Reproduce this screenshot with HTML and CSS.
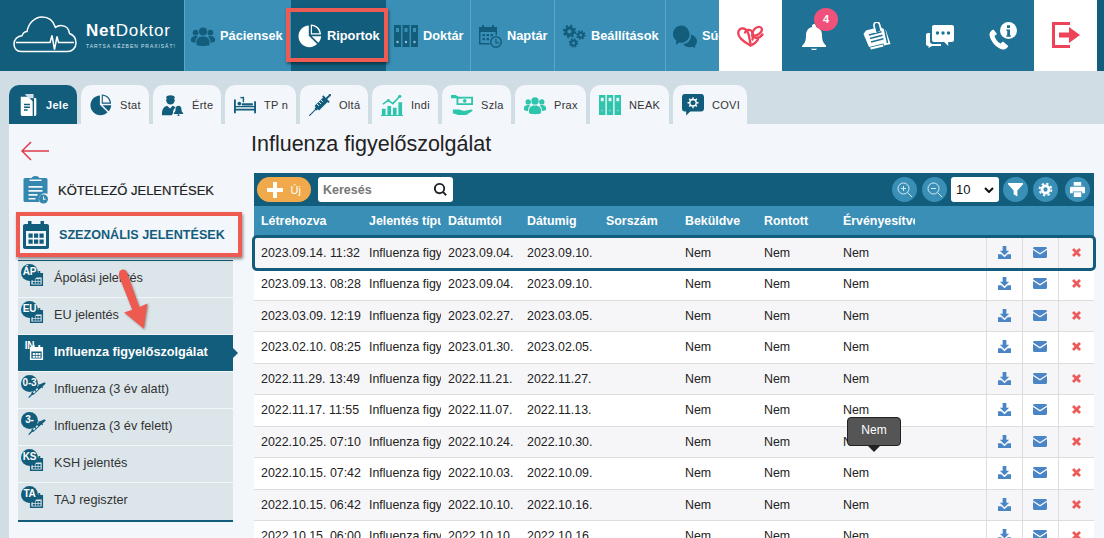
FILE: index.html
```html
<!doctype html>
<html>
	<head>
		<meta http-equiv="Content-Type" content="text/html; charset=utf-8">
		<title>NetDoktor - Influenza figyelőszolgálat</title>
		<link rel="stylesheet" href="styles.css">
	</head>
<body>

	<svg class="sprites" xmlns="http://www.w3.org/2000/svg">
		<symbol id="i-users" viewBox="0 0 24 24"><circle cx="12" cy="7.500" r="4"/><circle cx="4.600" cy="8.600" r="2.900"/><circle cx="19.400" cy="8.600" r="2.900"/><path d="M5.500 21v-3.500c0-3 2.500-5 6.500-5s6.500 2 6.500 5V21c-3.500 1.300-9.500 1.300-13 0z"/><path d="M4.500 17.500v1.200C2 18.400 0 17.500 0 17.500v-2.300c0-2 1.800-3.300 4.600-3.300 1 0 1.900.2 2.500.5-1.500 1.200-2.600 3-2.600 5.100zM19.500 17.500v1.200c2.500-.3 4.500-1.200 4.500-1.200v-2.300c0-2-1.800-3.300-4.600-3.300-1 0-1.900.2-2.500.5 1.500 1.200 2.600 3 2.600 5.100z"/></symbol>
		<symbol id="i-pie" viewBox="0 0 24 24"><path d="M10.800 1.500C4.900 1.800.5 6.500.5 12.300c0 6 4.900 10.900 10.900 10.900 3 0 5.700-1.200 7.700-3.200l-8.300-8.200z"/><path fill-rule="evenodd" d="M12.800.5V10.500H23C23 4.800 18.500.5 12.800.5zM14 1.900c3.900.4 6.900 3.400 7.500 7.300H14z"/><path d="M13.600 12.300H23.200c-.2 2.500-1.200 4.800-2.800 6.400z"/></symbol>
		<symbol id="i-binders" viewBox="0 0 24 24"><path fill-rule="evenodd" d="M0 1h7v22H0zM8.500 1h7v22h-7zM17 1h7v22h-7zM2 4v4h3V4zM10.500 4v4h3V4zM19 4v4h3V4z"/><circle cx="3.500" cy="18" r="1.200" fill="#8fc3dc"/><circle cx="12" cy="18" r="1.200" fill="#8fc3dc"/><circle cx="20.500" cy="18" r="1.200" fill="#8fc3dc"/></symbol>
		<symbol id="i-calclock" viewBox="0 0 24 24"><path fill-rule="evenodd" d="M1 3h3V1h2v2h8V1h2v2h3v8.200a7 7 0 0 0-1.500-.2V8H2.500v11h9l.4 1.500H1zM4.500 10h2.500v2.300H4.500zM8.500 10H11v2.300H8.500zM12.500 10H15v2.300h-2.500zM4.500 14H7v2.300H4.500zM8.500 14H11v2.300H8.500z"/><path fill-rule="evenodd" d="M18 12a6 6 0 1 1 0 12 6 6 0 0 1 0-12zm0 1.500a4.500 4.500 0 1 0 0 9 4.500 4.500 0 0 0 0-9zM17.300 15h1.300v3.200h2.400v1.300h-3.700z"/></symbol>
		<symbol id="i-gears" viewBox="0 0 24 24"><g fill="none" stroke="currentColor"><circle cx="7.500" cy="7.500" r="3.600" stroke-width="3"/><circle cx="7.500" cy="7.500" r="5.600" stroke-width="2.200" stroke-dasharray="2.200 2.200"/><circle cx="18.800" cy="11" r="2.500" stroke-width="2"/><circle cx="18.800" cy="11" r="4" stroke-width="1.600" stroke-dasharray="1.600 1.540"/><circle cx="11.500" cy="19" r="2.500" stroke-width="2"/><circle cx="11.500" cy="19" r="4" stroke-width="1.600" stroke-dasharray="1.600 1.540"/></g></symbol>
		<symbol id="i-help" viewBox="0 0 24 24"><path d="M16.500 9.500a8 8 0 0 1 .1 1c0 5-4.300 8.300-8.600 8.300-.6 0-1.400-.1-1.900-.2L3 21l.3-4.400C1.100 15 0 12.800 0 10.300 0 5.400 3.600 1.500 8.500 1.500c4 0 7.100 3.200 8 8z"/><path d="M18 10.500c3.300 1 6 3.500 6 6.800 0 1.900-.8 3.400-2.200 4.600l.5 2.100-3-1.300c-2.900 1-6.800.4-9.200-2.500 5.200-.4 8.400-4.800 7.900-9.700z"/></symbol>
		<symbol id="i-heart" viewBox="0 0 28 24"><g fill="none" stroke="currentColor" stroke-width="2.300" stroke-linecap="round"><path d="M13.500 22.500C7 19 1.200 15 1.200 10 1.200 6.500 4 5 6.500 5.500c3 .6 4.800 4 5.500 7.500.5 2.500.8 5.500 1.500 7"/><path d="M13.500 22.500c3-1 6-3.500 7.500-6"/><path d="M8 9.500c1.500-3 5-3.500 7-1 1.500 2 1 5 .5 8"/><path d="M15 12.500c3 .5 7-1 9-3.500 1.500-2 1-4.500-1-5-3-.7-6.500 2-7.500 5.500-.8 3 1 5.500 4 5.500 2.500 0 4.500-1.500 6-3.500"/></g></symbol>
		<symbol id="i-bell" viewBox="0 0 24 26"><path d="M12 0c1.200 0 2 .8 2 2v.9c3.600.9 6 3.800 6 7.600 0 6 1 8 4 11v1.500H0V22c3-3 4-5 4-11 0-4.300 2.400-7.200 6-8.100V2c0-1.200.8-2 2-2z"/><path d="M9 24.800h6c0 1-1.300 1.200-3 1.200s-3-.2-3-1.200z"/></symbol>
		<symbol id="i-note" viewBox="0 0 28 28"><path d="M3 8.500l15-4 .5 1.500c1.500 1 3.500 1 4.500 2.500L27.500 22 21 23.500 20.500 21.500 6 25 .5 12z" fill="currentColor"/><path d="M7 25.500l13-3 .5 2L8 27.500z" fill="currentColor"/><g stroke="#1f7296" stroke-width="1.500" fill="none"><path d="M6 13l12.500-3.300M7 16.500l12.500-3.300M8 20l12.500-3.300"/><path d="M21.500 7l3 14"/></g><path d="M12.800 11l-1.800-7c-.5-2 .8-3.500 2.300-3.800 1.500-.3 2.900.8 3.300 2.300l1.400 5.500" fill="#1f7296" stroke="currentColor" stroke-width="1.600"/></symbol>
		<symbol id="i-chat" viewBox="0 0 28 24"><path d="M8 1h18c1.100 0 2 .9 2 2v13c0 1.100-.9 2-2 2h-3.800v4l-4-4H8c-1.100 0-2-.9-2-2V3c0-1.100.9-2 2-2z"/><path d="M4 9v8.500c0 1.400 1.100 2.500 2.500 2.500H15v2H6l-3.500 2V22H2c-1.100 0-2-.9-2-2v-9c0-1.100.9-2 2-2z"/><circle cx="11.500" cy="9" r="1.700" fill="#1f7296"/><circle cx="17" cy="9" r="1.700" fill="#1f7296"/><circle cx="22.500" cy="9" r="1.700" fill="#1f7296"/></symbol>
		<symbol id="i-phone" viewBox="0 0 28 28"><path d="M4.500 7.500C1.500 8.800.3 10.800.5 13c1 6.500 7 13 13 14.500 2.500.5 4.500-1 5.800-3.500l-5.300-4.500-2.500 2c-2.800-1.500-5-4.300-6-7.500l2.500-2z"/><circle cx="19.500" cy="8.500" r="8.500"/><path d="M18 3.300h3v2.700h-3zM17.300 7.500h3.700v6h1v1.300h-4.800v-1.300h1v-4.700h-.9z" fill="#1f7296"/></symbol>
		<symbol id="i-logout" viewBox="0 0 28 26"><path d="M0 0h18v3H3v20h15v3H0z"/><path d="M17 5l11 8-11 8v-5.500H7v-5h10z"/></symbol>
		<symbol id="i-docs" viewBox="0 0 24 24"><path d="M8 0h9v4.500c-3 0-4.500 0-4.500 0L8 1z" opacity=".8"/><path d="M3 3h8l5 5v16H5c-1.100 0-2-.9-2-2z"/><path d="M18 4l2 1v17c0 1.100-.9 2-2 2h-.5V5z"/><path d="M6.500 11.500h6.500M6.500 14.500h6.500M6.500 17.500h4" fill="none" stroke="#135d7c" stroke-width="1.500"/></symbol>
		<symbol id="i-nurse" viewBox="0 0 26 26"><circle cx="10" cy="7.500" r="5"/><path d="M4.500 4C6 .5 14 .5 15.500 4 11 5.500 8 5.500 4.500 4z"/><path d="M0 23c0-4.500 2-8 6-9l3.500 3 3-3c1.500.4 2.700 1 3.600 2.300-2 1.200-3 3-3 5.200 0 1.800-1 2.500-1.500 3.500H0z"/><path d="M19.500 14c2.200 0 3.500 1.500 3.500 4 0 2 .6 3.200 2 4.500v1H14v-1c1.400-1.300 2-2.500 2-4.500 0-2.500 1.300-4 3.500-4z"/><circle cx="19.500" cy="25" r="1.200"/></symbol>
		<symbol id="i-bed" viewBox="0 0 24 24"><path fill-rule="evenodd" d="M0 6h2v7h20V8h2v13h-2v-3H2v3H0zM2 14.500V16h20v-1.500z"/><circle cx="5.800" cy="10.500" r="2"/><path d="M8.500 10h12v2.500h-12zM9.500 3h1.500v6H9.500zM7 3l3 .5V5L7 4.500z"/></symbol>
		<symbol id="i-syringe" viewBox="0 0 24 24"><g transform="rotate(45 12 12)"><path d="M8.500-4.500h7V-3h-7zM11-3h2V2h-2zM7 2h10v1.800H7zM8.500 3.800h7V17h-2v2h-.9v11h-1.200V19h-.9v-2h-2z"/><path d="M8.500 7.500h3.500M8.500 10.500h3.500M8.500 13.500h3.500" stroke="#f3f6fb" stroke-width="1"/></g></symbol>
		<symbol id="i-chart" viewBox="0 0 24 24"><path d="M1 16h4v7H1zM7 13h4v10H7zM13 15h4v8h-4zM19 9h4v14h-4zM0 23h24v1H0z"/><path d="M2 11l6-4 5 3.500L20 3" fill="none" stroke="currentColor" stroke-width="1.800"/><circle cx="8" cy="7" r="1.500"/><circle cx="20.500" cy="2.500" r="1.800"/></symbol>
		<symbol id="i-money" viewBox="0 0 24 24"><path fill-rule="evenodd" d="M6 3h18v9H6zM8 5v5h14V5z"/><path d="M0 1h5l3 2 3.500.5L12 5H8L5 4.500H0zM2 17h7l5 1.500 8-1.500c1.500 0 2 1 1 1.800l-6.500 4H8L2 21z"/><circle cx="15" cy="7.500" r="2"/></symbol>
		<symbol id="i-covid" viewBox="0 0 24 24"><path d="M3 0h18c1.700 0 3 1.300 3 3v13c0 1.700-1.300 3-3 3H9l-4.500 4.500V19H3c-1.700 0-3-1.300-3-3V3c0-1.700 1.300-3 3-3z"/><g fill="none" stroke="#fff" stroke-width="1.500"><circle cx="12" cy="9.500" r="3.500"/><path d="M12 3.500v2.500M12 13v2.500M6 9.500h2.500M15.500 9.500H18M7.800 5.300l1.800 1.800M14.400 11.900l1.800 1.800M16.200 5.300l-1.800 1.800M9.600 11.900l-1.800 1.800"/></g></symbol>
		<symbol id="i-clip" viewBox="0 0 24 28"><path d="M0 3.500C0 2.500 1 2 2 2h20c1 0 2 .5 2 1.500V18a6 6 0 0 0-8 8H2c-1 0-2-.5-2-1.500z"/><path d="M8 3c0-1.800 1.700-3 4-3s4 1.200 4 3v2H8z"/><path d="M6 3.500h12V5H6zM5 10h14v1.800H5zM5 14h14v1.800H5zM5 18h9v1.800H5zM5 22h7v1.500H5z" fill="#f3f6fb"/><circle cx="20" cy="23" r="4.500"/><path d="M19.500 20.500h1v2.300H22v1h-2.500z" fill="#f3f6fb"/></symbol>
		<symbol id="i-cal" viewBox="0 0 26 28"><path fill-rule="evenodd" d="M2 3h3V0h3.500v3h9V0H21v3h3c1.100 0 2 .9 2 2v21c0 1.100-.9 2-2 2H2c-1.100 0-2-.9-2-2V5c0-1.100.9-2 2-2zM3 10v15h20V10z"/><path d="M5.500 12.500h4.200v4.200H5.500zM11 12.500h4.200v4.200H11zM16.500 12.500h4.200v4.200h-4.200zM5.500 18.500h4.200v4.200H5.500zM11 18.500h4.200v4.200H11zM16.500 18.500h4.200v4.200h-4.200z"/></symbol>
		<symbol id="i-minical" viewBox="0 0 16 16"><path fill-rule="evenodd" d="M1 2h3V0h2v2h4V0h2v2h3v14H1zM2.500 7v7.500h11V7z"/><path d="M4 8.500h2.300v2.200H4zM7 8.500h2.300v2.200H7zM10 8.500h2.300v2.200H10zM4 11.500h2.300v2.200H4zM7 11.500h2.300v2.200H7zM10 11.500h2.300v2.200H10z"/></symbol>
		<symbol id="i-vaccine" viewBox="0 0 24 20"><path d="M21 0l1.500 1.500-4 4 .8.800-1 1-1-.8L8 15l-1.800.3L2.500 19 1.500 18l3.600-3.800.3-1.800 8.700-8.300-.8-1 1-1 .8.800z"/><path d="M9 10l1.500 1.500-2 2L7 12zM12 7l1.500 1.500-2 2L10 9z" fill="#dbe5ea"/></symbol>
		<symbol id="i-download" viewBox="0 0 14 14"><path d="M5 0h4v5h3L7 10 2 5h3z"/><path d="M0 9h3.500L7 12l3.500-3H14v5H0z"/></symbol>
		<symbol id="i-mail" viewBox="0 0 14 11"><path d="M0 1.500C0 .6.600 0 1.500 0h11c.9 0 1.500.6 1.500 1.500L7 6z"/><path d="M0 3l7 4.500L14 3v6.500c0 .9-.6 1.500-1.500 1.500h-11C.6 11 0 10.400 0 9.500z"/></symbol>
		<symbol id="i-x" viewBox="0 0 10 10"><path d="M2.200 0L5 2.800 7.800 0 10 2.200 7.200 5 10 7.800 7.800 10 5 7.200 2.200 10 0 7.800 2.800 5 0 2.200z"/></symbol>
		<symbol id="i-search" viewBox="0 0 14 14"><path fill-rule="evenodd" d="M6 0a6 6 0 0 1 4.800 9.500l3 3-1.400 1.400-3-3A6 6 0 1 1 6 0zm0 2a4 4 0 1 0 0 8 4 4 0 0 0 0-8z"/></symbol>
	</svg>

	<!--top start-->
	<div class="top">
		<div class="logo">
			<svg class="logo_pic" viewBox="0 0 64 37" fill="none" stroke="#fff" stroke-width="1.500"><path d="M12 35.500H8C3.500 35.500 1 32 1 28c0-4.500 3.500-8 8-8.300C10 17 11.500 15.500 14 15.500 15.500 7 22 1 29 1c6.500 0 11.500 4 13.500 10.500C44 10 46 9.500 48 9.500c5 0 8 3.500 8.500 8 4 1.500 6.500 5.500 6.500 9.500 0 5-4 8.500-8.500 8.500H12z" stroke-linejoin="round"/><path d="M3 26.500h34l2-7 2.500 14 2.500-13 1.500 6H61"/></svg>
			<div class="logo_text">
				<div class="logo_name"><b>Net</b>Doktor</div>
				<div class="logo_sub">TARTSA KÉZBEN PRAXISÁT!</div>
			</div>
		</div>
		<div class="nav">
			<a class="nav_item n_pac"><svg class="nav_ico"><use href="#i-users"/></svg>Páciensek</a>
			<a class="nav_item nav_on n_rip"><svg class="nav_ico"><use href="#i-pie"/></svg>Riportok<i class="mark"></i></a>
			<a class="nav_item n_dok"><svg class="nav_ico"><use href="#i-binders"/></svg>Doktár</a>
			<a class="nav_item n_nap"><svg class="nav_ico"><use href="#i-calclock"/></svg>Naptár</a>
			<a class="nav_item n_bea"><svg class="nav_ico"><use href="#i-gears"/></svg>Beállítások</a>
			<a class="nav_item"><svg class="nav_ico"><use href="#i-help"/></svg>Súgó</a>
		</div>
		<div class="t_box t_white"><svg class="t_heart"><use href="#i-heart"/></svg></div>
		<div class="t_tools">
			<div class="t_box"><svg class="t_bell"><use href="#i-bell"/></svg><span class="badge">4</span></div>
			<div class="t_box"><svg class="t_ico"><use href="#i-note"/></svg></div>
			<div class="t_box"><svg class="t_chat"><use href="#i-chat"/></svg></div>
			<div class="t_box"><svg class="t_ico"><use href="#i-phone"/></svg></div>
		</div>
		<div class="t_box t_white"><svg class="t_logout"><use href="#i-logout"/></svg></div>
	</div>
	<!--end top-->

	<!--tabs start-->
	<div class="tabs">
		<div class="tab tab_on w68"><svg class="tab_ico ico_white"><use href="#i-docs"/></svg>Jele</div>
		<div class="tab w68"><svg class="tab_ico ico_dark"><use href="#i-pie"/></svg>Stat</div>
		<div class="tab w68"><svg class="tab_ico ico_dark"><use href="#i-nurse"/></svg>Érte</div>
		<div class="tab w71"><svg class="tab_ico ico_dark"><use href="#i-bed"/></svg>TP n</div>
		<div class="tab w68"><svg class="tab_ico ico_dark"><use href="#i-syringe"/></svg>Oltá</div>
		<div class="tab w66"><svg class="tab_ico ico_green"><use href="#i-chart"/></svg>Indi</div>
		<div class="tab w69"><svg class="tab_ico ico_green"><use href="#i-money"/></svg>Szla</div>
		<div class="tab w71"><svg class="tab_ico ico_green"><use href="#i-users"/></svg>Prax</div>
		<div class="tab w79"><svg class="tab_ico ico_green"><use href="#i-binders"/></svg>NEAK</div>
		<div class="tab w74"><svg class="tab_ico ico_dark"><use href="#i-covid"/></svg>COVI</div>
	</div>
	<!--end tabs-->

	<div class="page">

		<!--side start-->
		<div class="side">
			<svg class="back" viewBox="0 0 28 20" fill="none" stroke="#e0394a" stroke-width="1.500"><path d="M28 10H1M10 1l-9 9 9 9"/></svg>
			<div class="s_head s_must"><svg class="s_clip"><use href="#i-clip"/></svg>KÖTELEZŐ JELENTÉSEK</div>
			<div class="s_head s_sel"><svg class="s_cal"><use href="#i-cal"/></svg>SZEZONÁLIS JELENTÉSEK<i class="mark"></i></div>
			<ul class="s_list">
				<li><span class="s_pic"><b class="s_dot">ÁP</b><svg class="s_mini"><use href="#i-minical"/></svg></span>Ápolási jelentés</li>
				<li><span class="s_pic"><b class="s_dot">EU</b><svg class="s_mini"><use href="#i-minical"/></svg></span>EU jelentés</li>
				<li class="s_on"><span class="s_pic"><b class="s_dot">IN</b><svg class="s_mini"><use href="#i-minical"/></svg></span>Influenza figyelőszolgálat</li>
				<li><span class="s_pic"><b class="s_dot">0-3</b><svg class="s_vac"><use href="#i-vaccine"/></svg></span>Influenza (3 év alatt)</li>
				<li><span class="s_pic"><b class="s_dot">3-</b><svg class="s_vac"><use href="#i-vaccine"/></svg></span>Influenza (3 év felett)</li>
				<li><span class="s_pic"><b class="s_dot">KS</b><svg class="s_mini"><use href="#i-minical"/></svg></span>KSH jelentés</li>
				<li><span class="s_pic"><b class="s_dot">TA</b><svg class="s_mini"><use href="#i-minical"/></svg></span>TAJ regiszter</li>
			</ul>
			<svg class="red_arrow" viewBox="0 0 40 70"><path d="M4 4c3-3 7-2 8 1l14 39 9-4-4 28-22-18 9-3L3 9z" fill="#ee5a50"/></svg>
		</div>
		<!--end side-->

		<!--main start-->
		<div class="main">
			<h1>Influenza figyelőszolgálat</h1>
			<div class="bar">
				<div class="b_new"><span class="b_plus"></span>Új</div>
				<div class="b_search">Keresés<svg class="b_glass"><use href="#i-search"/></svg></div>
				<div class="b_right">
					<span class="b_btn"><svg viewBox="0 0 16 16" fill="none" stroke="#d7ebf4" stroke-width="1"><circle cx="6.500" cy="6.500" r="5.500"/><path d="M10.500 10.500L15 15M4 6.500h5M6.500 4v5"/></svg></span>
					<span class="b_btn"><svg viewBox="0 0 16 16" fill="none" stroke="#d7ebf4" stroke-width="1"><circle cx="6.500" cy="6.500" r="5.500"/><path d="M10.500 10.500L15 15M4 6.500h5"/></svg></span>
					<div class="b_size">10<svg viewBox="0 0 10 6" fill="none" stroke="#111" stroke-width="2"><path d="M1 1l4 4 4-4"/></svg></div>
					<span class="b_btn"><svg class="big" viewBox="0 0 16 16" fill="#fff"><path d="M0 1h16v1.500L10 9v6.500L6 13V9L0 2.500z"/></svg></span>
					<span class="b_btn"><svg class="big" viewBox="0 0 16 16" fill="none" stroke="#fff"><circle cx="8" cy="8" r="3.800" stroke-width="3"/><circle cx="8" cy="8" r="6.300" stroke-width="2" stroke-dasharray="2.500 2.450"/></svg></span>
					<span class="b_btn b_last"><svg class="big" viewBox="0 0 16 16" fill="#fff"><path d="M4 0h8v4H4zM1.500 5h13c.8 0 1.500.7 1.500 1.500V12h-3v-2H3v2H0V6.500C0 5.700.7 5 1.500 5zM4 11h8v5H4z"/></svg></span>
				</div>
			</div>
			<table class="list">
				<colgroup>
					<col class="c_date"><col class="c_w"><col class="c_w"><col class="c_w"><col class="c_w"><col class="c_w"><col class="c_w"><col class="c_w"><col class="c_rest"><col class="c_a"><col class="c_a"><col class="c_a">
				</colgroup>
				<thead>
					<tr><th>Létrehozva</th><th>Jelentés típusa</th><th>Dátumtól</th><th>Dátumig</th><th>Sorszám</th><th>Beküldve</th><th>Rontott</th><th>Érvényesítve</th><th></th><th></th><th></th><th></th></tr>
				</thead>
				<tbody>
					<tr class="r_sel"><td>2023.09.14. 11:32</td><td>Influenza figyelő</td><td>2023.09.04.</td><td>2023.09.10.</td><td></td><td>Nem</td><td>Nem</td><td>Nem</td><td></td><td class="a"><svg class="a_down"><use href="#i-download"/></svg></td><td class="a"><svg class="a_mail"><use href="#i-mail"/></svg></td><td class="a"><svg class="a_x"><use href="#i-x"/></svg></td></tr>
					<tr><td>2023.09.13. 08:28</td><td>Influenza figyelő</td><td>2023.09.04.</td><td>2023.09.10.</td><td></td><td>Nem</td><td>Nem</td><td>Nem</td><td></td><td class="a"><svg class="a_down"><use href="#i-download"/></svg></td><td class="a"><svg class="a_mail"><use href="#i-mail"/></svg></td><td class="a"><svg class="a_x"><use href="#i-x"/></svg></td></tr>
					<tr><td>2023.03.09. 12:19</td><td>Influenza figyelő</td><td>2023.02.27.</td><td>2023.03.05.</td><td></td><td>Nem</td><td>Nem</td><td>Nem</td><td></td><td class="a"><svg class="a_down"><use href="#i-download"/></svg></td><td class="a"><svg class="a_mail"><use href="#i-mail"/></svg></td><td class="a"><svg class="a_x"><use href="#i-x"/></svg></td></tr>
					<tr><td>2023.02.10. 08:25</td><td>Influenza figyelő</td><td>2023.01.30.</td><td>2023.02.05.</td><td></td><td>Nem</td><td>Nem</td><td>Nem</td><td></td><td class="a"><svg class="a_down"><use href="#i-download"/></svg></td><td class="a"><svg class="a_mail"><use href="#i-mail"/></svg></td><td class="a"><svg class="a_x"><use href="#i-x"/></svg></td></tr>
					<tr><td>2022.11.29. 13:49</td><td>Influenza figyelő</td><td>2022.11.21.</td><td>2022.11.27.</td><td></td><td>Nem</td><td>Nem</td><td>Nem</td><td></td><td class="a"><svg class="a_down"><use href="#i-download"/></svg></td><td class="a"><svg class="a_mail"><use href="#i-mail"/></svg></td><td class="a"><svg class="a_x"><use href="#i-x"/></svg></td></tr>
					<tr><td>2022.11.17. 11:55</td><td>Influenza figyelő</td><td>2022.11.07.</td><td>2022.11.13.</td><td></td><td>Nem</td><td>Nem</td><td>Nem</td><td></td><td class="a"><svg class="a_down"><use href="#i-download"/></svg></td><td class="a"><svg class="a_mail"><use href="#i-mail"/></svg></td><td class="a"><svg class="a_x"><use href="#i-x"/></svg></td></tr>
					<tr><td>2022.10.25. 07:10</td><td>Influenza figyelő</td><td>2022.10.24.</td><td>2022.10.30.</td><td></td><td>Nem</td><td>Nem</td><td>Nem<div class="tip">Nem</div></td><td></td><td class="a"><svg class="a_down"><use href="#i-download"/></svg></td><td class="a"><svg class="a_mail"><use href="#i-mail"/></svg></td><td class="a"><svg class="a_x"><use href="#i-x"/></svg></td></tr>
					<tr><td>2022.10.15. 07:42</td><td>Influenza figyelő</td><td>2022.10.03.</td><td>2022.10.09.</td><td></td><td>Nem</td><td>Nem</td><td>Nem</td><td></td><td class="a"><svg class="a_down"><use href="#i-download"/></svg></td><td class="a"><svg class="a_mail"><use href="#i-mail"/></svg></td><td class="a"><svg class="a_x"><use href="#i-x"/></svg></td></tr>
					<tr><td>2022.10.15. 06:42</td><td>Influenza figyelő</td><td>2022.10.10.</td><td>2022.10.16.</td><td></td><td>Nem</td><td>Nem</td><td>Nem</td><td></td><td class="a"><svg class="a_down"><use href="#i-download"/></svg></td><td class="a"><svg class="a_mail"><use href="#i-mail"/></svg></td><td class="a"><svg class="a_x"><use href="#i-x"/></svg></td></tr>
					<tr><td>2022.10.15. 06:00</td><td>Influenza figyelő</td><td>2022.10.10.</td><td>2022.10.16.</td><td></td><td>Nem</td><td>Nem</td><td>Nem</td><td></td><td class="a"><svg class="a_down"><use href="#i-download"/></svg></td><td class="a"><svg class="a_mail"><use href="#i-mail"/></svg></td><td class="a"><svg class="a_x"><use href="#i-x"/></svg></td></tr>
				</tbody>
			</table>
		</div>
		<!--end main-->

	</div>

</body>
</html>
```

FILE: styles.css
```css
*{margin:0;padding:0;box-sizing:border-box;}
html,body{height:538px;overflow:hidden;}
body{font-size:12.5px;font-family:"Liberation Sans",Arial,sans-serif;color:#222;background:#d0dde4;}
.sprites{display:none;}

/*top start*/
.top{display:flex;height:71px;background:#135d7c;}
.logo{display:flex;align-items:center;width:184px;padding:0 0 0 13px;flex:none;}
.logo_pic{width:64px;height:37px;margin-top:-2px;flex:none;}
.logo_text{margin-left:9px;color:#fff;}
.logo_name{font-size:17px;letter-spacing:.8px;line-height:19px;font-weight:400;}
.logo_name b{font-weight:700;}
.logo_sub{font-size:5px;letter-spacing:.95px;line-height:8px;margin-top:2px;white-space:nowrap;color:#cfe2ec;}
.nav{display:flex;width:535px;flex:none;overflow:hidden;background:#3a8fb7;}
.nav_item{position:relative;display:flex;align-items:center;flex:none;height:71px;padding:0 0 0 7px;gap:5px;font-size:12.800px;font-weight:700;color:#fff;border-left:1px solid #5fa5c6;}
.n_pac{width:107px;padding-left:6px;}
.n_rip{width:95px;}
.n_dok{width:84px;padding-left:8px;border-left:0;}
.n_nap{width:84px;}
.n_bea{width:111px;}
.nav_on{background:#135d7c;border-left:0;}
.nav_on::after{content:"";position:absolute;left:40px;top:71px;border:6px solid transparent;border-top-color:#135d7c;border-bottom:0;z-index:2;}
.nav_ico{width:24px;height:24px;flex:none;fill:#135d7c;color:#135d7c;}
.nav_on .nav_ico{fill:#fff;color:#fff;}
.t_tools{display:flex;background:#1f7296;}
.t_box{position:relative;display:flex;align-items:center;justify-content:center;width:63px;height:71px;flex:none;fill:#fff;color:#fff;}
.t_white{background:#fff;fill:#ed4257;color:#ed4257;}
.t_heart{width:28px;height:24px;margin-top:-1px;}
.t_bell{width:24px;height:26px;margin:2px 0 0 0;}
.t_ico{width:28px;height:28px;}
.t_chat{width:28px;height:24px;}
.t_logout{width:28px;height:26px;margin-top:-1px;}
.badge{position:absolute;left:32px;top:8px;width:24px;height:23px;border-radius:50%;background:#f0517a;color:#fff;font-size:11px;font-weight:700;line-height:22px;text-align:center;}
/*end top*/

/*tabs start*/
.tabs{display:flex;gap:4px;height:53px;padding:14px 0 0 9px;}
.tab{display:flex;align-items:center;gap:8px;height:39px;padding-left:9px;border-radius:10px 10px 0 0;background:#f3f6fb;font-size:11px;letter-spacing:.3px;color:#333;flex:none;overflow:hidden;}
.tab_on{background:#135d7c;color:#fff;font-weight:700;gap:6px;}
.w66{width:66px;}
.w68{width:68px;}
.w69{width:69px;}
.w71{width:71px;}
.w74{width:74px;}
.w79{width:79px;}
.tab_ico{width:22px;height:22px;flex:none;}
.ico_white{fill:#fff;color:#fff;}
.ico_dark{fill:#135d7c;color:#135d7c;}
.ico_green{fill:#2dc5ab;color:#2dc5ab;}
/*end tabs*/

.page{display:flex;height:414px;margin-left:9px;background:#f3f6fb;}

/*side start*/
.side{position:relative;width:243px;padding:17px 0 0 9px;flex:none;}
.back{display:block;width:28px;height:20px;margin-left:3px;}
.s_head{position:relative;display:flex;align-items:center;height:45px;font-size:13px;color:#222;-webkit-text-stroke:.2px #222;}
.s_must{height:40px;margin-top:9px;}
.s_clip{width:27px;height:28px;margin:0 9px 0 4px;fill:#3488b0;color:#3488b0;flex:none;}
.s_cal{width:26px;height:28px;margin:0 10px 0 5px;fill:#135d7c;color:#135d7c;flex:none;}
.s_sel{font-size:12.600px;font-weight:700;color:#135d7c;-webkit-text-stroke:0;margin-top:2px;}
.s_list{list-style:none;width:215px;margin-top:3px;border-top:1px solid #135d7c;border-bottom:2px solid #135d7c;background:#dbe5ea;}
.s_list li{display:flex;align-items:center;height:37px;border-bottom:1px solid #f3f6fb;font-size:12.700px;color:#333;padding-bottom:3px;}
.s_list li:last-child{border-bottom:0;}
.s_list .s_on{position:relative;background:#135d7c;color:#fff;font-weight:700;}
.s_on::after{content:"";position:absolute;left:215px;top:13px;border:5px solid transparent;border-left-color:#135d7c;border-right:0;}
.s_pic{position:relative;display:block;width:36px;height:30px;flex:none;}
.s_dot{position:absolute;left:3px;top:1px;width:17px;height:17px;border-radius:50%;background:#135d7c;color:#fff;font-size:10px;line-height:16px;text-align:center;letter-spacing:-.2px;white-space:nowrap;z-index:1;}
.s_mini{position:absolute;left:11px;top:7px;width:15px;height:17px;fill:#135d7c;}
.s_vac{position:absolute;left:9px;top:8px;width:20px;height:17px;fill:#135d7c;}
.s_on .s_dot{background:transparent;}
.s_on .s_mini{fill:#fff;}
.red_arrow{position:absolute;left:107px;top:143px;width:36px;height:64px;filter:drop-shadow(1px 1px 1px rgba(0,0,0,.35));}
.mark{position:absolute;border:4px solid #ed5b52;box-shadow:1px 2px 3px rgba(0,0,0,.45);pointer-events:none;z-index:3;}
.nav_on .mark{left:-5px;right:-2px;top:8px;bottom:9px;}
.s_sel .mark{left:-2px;top:0;width:226px;height:45px;}
/*end side*/

/*main start*/
.main{width:842px;flex:none;}
.main h1{font-size:21.500px;font-weight:400;line-height:26px;margin:7px 0 0 -1px;color:#222;}
.bar{display:flex;align-items:center;width:840px;height:33px;margin:16px 0 0 2px;padding-left:3px;background:#135d7c;}
.b_new{display:flex;align-items:center;justify-content:space-between;width:54px;height:25px;padding:0 10px;border-radius:13px;background:#f0a94b;color:#fff;font-size:11px;}
.b_plus{position:relative;width:16px;height:16px;background:linear-gradient(#fff,#fff) center/16px 4px no-repeat,linear-gradient(#fff,#fff) center/4px 16px no-repeat;}
.b_search{display:flex;align-items:center;justify-content:space-between;width:135px;height:25px;margin-left:7px;padding:0 6px 0 5px;border-radius:3px;background:#fff;color:#777;font-size:12.500px;font-weight:700;}
.b_glass{width:13px;height:13px;fill:#222;}
.b_right{display:flex;align-items:center;margin-left:auto;padding-right:4px;gap:5px;}
.b_btn{display:flex;align-items:center;justify-content:center;width:25px;height:25px;border-radius:50%;background:#3a8fb7;}
.b_last{margin-left:2px;}
.b_btn svg{width:16px;height:16px;}
.b_btn svg.big{width:15px;height:15px;}
.b_size{display:flex;align-items:center;justify-content:space-between;width:48px;height:25px;margin:0 -1px;padding:0 5px;border-radius:3px;background:#fff;color:#111;font-size:13px;}
.b_size svg{width:10px;height:6px;}

.list{width:840px;margin-left:2px;table-layout:fixed;border-collapse:collapse;font-size:12.400px;}
.c_date{width:108px;}
.c_w{width:79px;}
.c_rest{width:71px;}
.c_a{width:36px;}
.list th{height:31px;padding:0 0 2px 0;background:#3a8fb7;color:#fff;text-align:left;font-weight:700;}
.list th,.list td{overflow:hidden;white-space:nowrap;padding-left:7px;}
.list td{height:31.500px;color:#222;background:#fff;border-bottom:1px solid #ddd;}
.list tbody tr:nth-child(odd) td{background:#f6f6f8;}
.list .a{padding:0 0 2px 0;text-align:center;border-left:1px solid #ddd;}
.list svg{vertical-align:middle;}
.list tbody tr:first-child td{border-bottom-color:transparent;}
.r_sel{outline:3px solid #135d7c;outline-offset:-1px;border-radius:3px;}
.a_down{width:13px;height:13px;fill:#4a86c5;}
.a_mail{width:14px;height:11px;fill:#4a86c5;}
.a_x{width:9px;height:9px;fill:#ee5a5a;}
.list td:has(.tip){overflow:visible;position:relative;}
.tip{position:absolute;left:11px;top:-10px;width:54px;height:29px;border:1px solid #222;border-radius:4px;background:#555;color:#fff;font-size:12px;line-height:25px;text-align:center;z-index:4;}
.tip::after{content:"";position:absolute;left:19px;top:27px;border:7px solid transparent;border-top-color:#222;border-bottom:0;}
/*end main*/
```
